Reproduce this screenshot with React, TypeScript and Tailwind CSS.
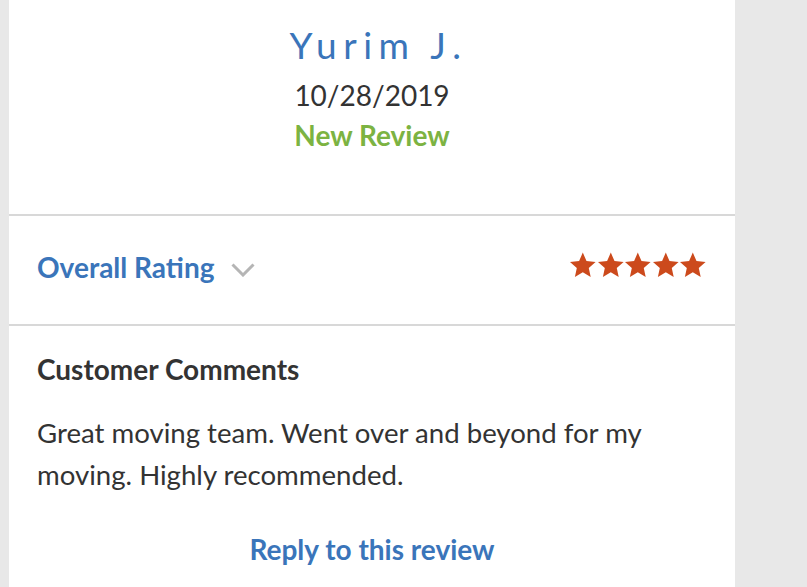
import React from "react";

function Star() {
  return (
    <svg width="27.6" height="25.5" viewBox="-0.3 0 24.6 22.7" className="block">
      <path
        d="M12 0.5L15.29 7.97L23.41 8.79L17.33 14.23L19.05 22.21L12 18.1L4.95 22.21L6.67 14.23L0.59 8.79L8.71 7.97Z"
        fill="#cc4a1c"
      />
    </svg>
  );
}

export default function App() {
  return (
    <div
      className="w-[807px] h-[587px] bg-[#e8e8e8] flex overflow-hidden"
      style={{ fontFamily: "Lato, 'Open Sans', sans-serif" }}
    >
      <div className="ml-[9px] w-[726px] h-full bg-white flex flex-col">
        <div className="h-[214px] flex flex-col items-center pt-[23px]">
          <div className="text-[37px] leading-[44px] tracking-[6.5px] pl-[13px] text-[#3a75ba]">Yurim J.</div>
          <div className="text-[28px] leading-[40px] text-[#333333] mt-[8px]">10/28/2019</div>
          <div className="text-[28px] leading-[40px] font-bold text-[#7cb342]">New Review</div>
        </div>
        <div className="h-[2px] bg-[#d8d8d8]" />
        <div className="h-[108px] flex items-start justify-between pt-[31px] pl-[28px] pr-[28px]">
          <div className="flex items-start">
            <span className="text-[28px] leading-[40px] font-bold text-[#3a75ba]">Overall Rating</span>
            <svg width="24" height="14" viewBox="0 0 24 14" className="ml-[17px] mt-[16px]">
              <path d="M1.5 1.5L12 12L22.5 1.5" fill="none" stroke="#b5b5b5" strokeWidth="3" />
            </svg>
          </div>
          <div className="flex mt-[5px]">
            <Star />
            <Star />
            <Star />
            <Star />
            <Star />
          </div>
        </div>
        <div className="h-[2px] bg-[#d8d8d8]" />
        <div className="pl-[28px] pr-[28px] pt-[23px]">
          <div className="text-[28px] font-bold text-[#333333] leading-[40px]">Customer Comments</div>
          <p className="text-[27.6px] text-[#333333] leading-[42px] mt-[23px]">
            Great moving team. Went over and beyond for my moving. Highly recommended.
          </p>
          <div className="text-center mt-[33px] text-[28px] font-bold text-[#3a75ba] leading-[40px]">
            Reply to this review
          </div>
        </div>
      </div>
    </div>
  );
}
